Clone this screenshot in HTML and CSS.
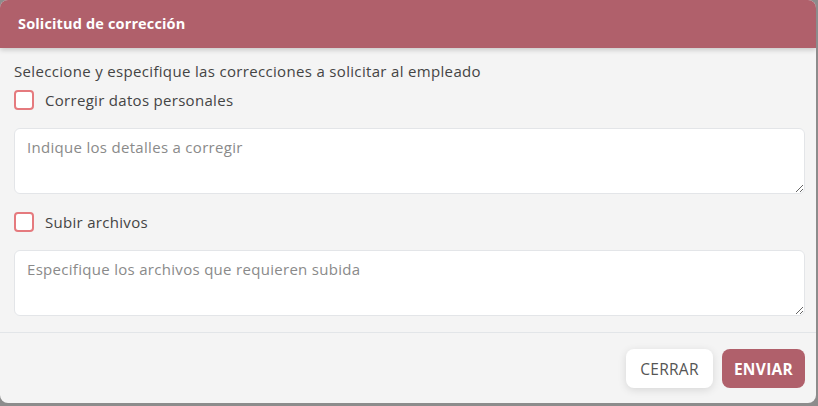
FILE: index.html
```html
<!DOCTYPE html>
<html lang="es">
<head>
<meta charset="utf-8">
<title>Solicitud de corrección</title>
<link rel="stylesheet" href="styles.css">
</head>
<body>
<div class="modal">
  <header class="modal-header">Solicitud de corrección</header>
  <main class="modal-body">
    <p class="intro">Seleccione y especifique las correcciones a solicitar al empleado</p>
    <label class="check-row"><input type="checkbox" class="check"><span>Corregir datos personales</span></label>
    <textarea class="field" placeholder="Indique los detalles a corregir"></textarea>
    <label class="check-row"><input type="checkbox" class="check"><span>Subir archivos</span></label>
    <textarea class="field" placeholder="Especifique los archivos que requieren subida"></textarea>
  </main>
  <footer class="modal-footer">
    <button class="btn btn-close">CERRAR</button>
    <button class="btn btn-send">ENVIAR</button>
  </footer>
</div>
</body>
</html>
```
FILE: styles.css
```css
* { box-sizing: border-box; }
html, body { margin: 0; padding: 0; }
body {
  background: #8c8c8c;
  width: 818px;
  height: 406px;
  font-family: "Open Sans", "Liberation Sans", sans-serif;
  overflow: hidden;
}
.modal {
  width: 816px;
  height: 403px;
  background: #f4f4f4;
  border-radius: 8px;
  overflow: hidden;
  display: flex;
  flex-direction: column;
}
.modal-header {
  height: 48px;
  flex: none;
  background: #b0606b;
  color: #fff;
  font-weight: 700;
  font-size: 14.5px;
  letter-spacing: 0.15px;
  padding-left: 18px;
  display: flex;
  align-items: center;
  padding-bottom: 2px;
  box-shadow: 0 2px 5px rgba(0,0,0,0.18);
  position: relative;
  z-index: 1;
}
.modal-body {
  padding: 13px 13px 16px 14px;
  display: flex;
  flex-direction: column;
  border-bottom: 1px solid #e2e5e8;
}
.intro {
  margin: 0;
  font-size: 15px;
  letter-spacing: 0.33px;
  line-height: 20px;
  color: #444;
}
.check-row {
  display: flex;
  align-items: center;
  gap: 11px;
  height: 20px;
  margin-top: 9px;
  font-size: 15px;
  letter-spacing: 0.3px;
  color: #444;
}
.check {
  appearance: none;
  -webkit-appearance: none;
  margin: 0;
  width: 20px;
  height: 20px;
  border: 2px solid #e57a7e;
  border-radius: 4px;
  background: #fff;
}
.field {
  margin-top: 18px;
  height: 66px;
  width: 791px;
  background: #fff;
  border: 1px solid #e3e5e8;
  border-radius: 6px;
  padding: 8px 12px;
  font-family: inherit;
  font-size: 15px;
  letter-spacing: 0.3px;
  line-height: 20px;
  color: #444;
}
.field::placeholder { color: #8a8a8a; }
.field + .check-row { margin-top: 18px; }
.modal-footer {
  flex: 1;
  display: flex;
  justify-content: flex-end;
  align-items: flex-start;
  gap: 9px;
  padding: 16px 11px 0 0;
}
.btn {
  height: 39px;
  border: none;
  border-radius: 8px;
  font-family: inherit;
  font-size: 15.5px;
  letter-spacing: 0.3px;
  padding: 0;
}
.btn-close {
  background: #fff;
  color: #555;
  font-weight: 500;
  width: 87px;
  box-shadow: 0 2px 8px rgba(0,0,0,0.12);
}
.btn-send {
  background: #b0606b;
  color: #fff;
  font-weight: 700;
  width: 83px;
}
```
